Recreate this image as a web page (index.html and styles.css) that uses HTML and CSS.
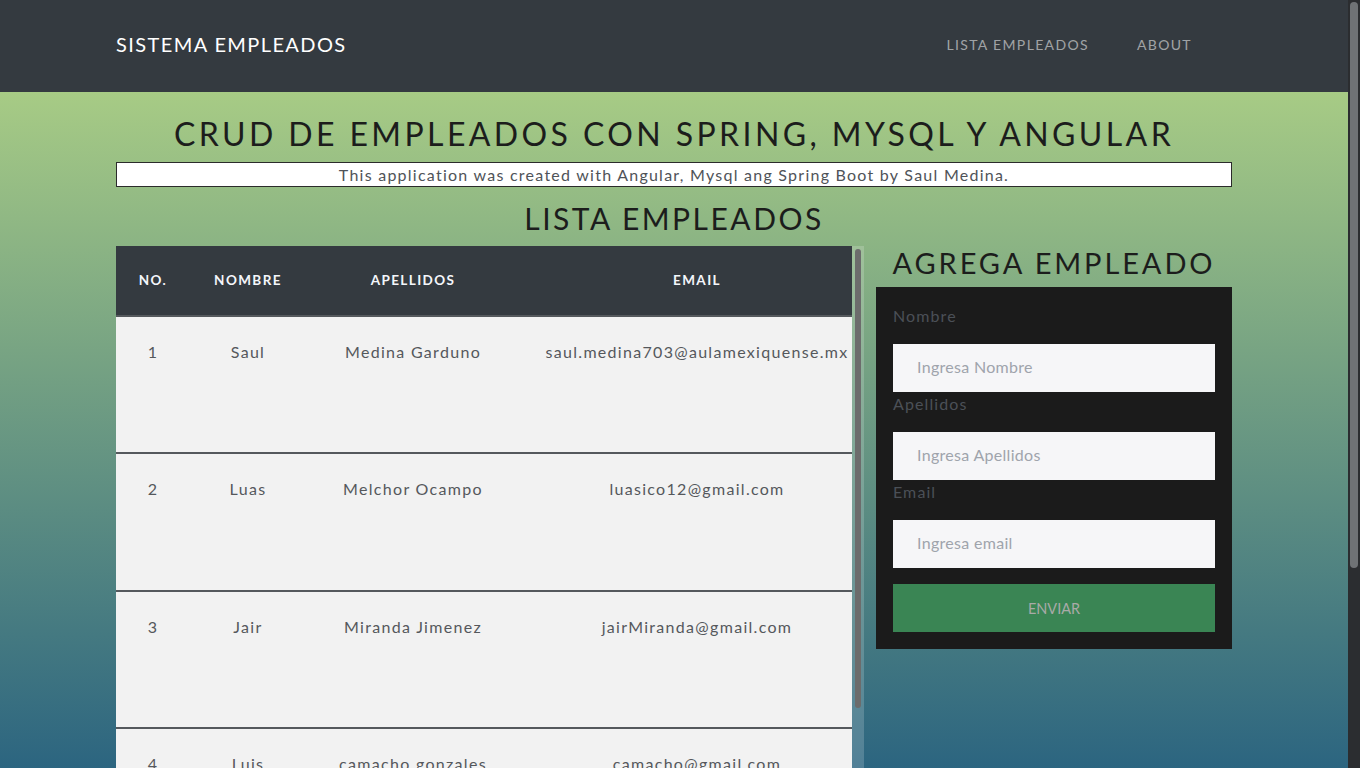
FILE: index.html
```html
<!DOCTYPE html>
<html lang="es">
<head>
<meta charset="utf-8">
<title>Sistema Empleados</title>
<link rel="stylesheet" href="styles.css">
</head>
<body>
<nav class="navbar">
  <div class="nav-inner">
    <a class="brand" href="#">SISTEMA EMPLEADOS</a>
    <ul class="nav-links">
      <li><a href="#">LISTA EMPLEADOS</a></li>
      <li><a href="#">ABOUT</a></li>
    </ul>
  </div>
</nav>
<main class="main">
  <div class="container">
    <h1 class="title">CRUD DE EMPLEADOS CON SPRING, MYSQL Y ANGULAR</h1>
    <p class="subtitle">This application was created with Angular, Mysql ang Spring Boot by Saul Medina.</p>
    <h2 class="list-title">LISTA EMPLEADOS</h2>
    <div class="content">
      <div class="table-wrap">
        <table class="emp-table">
          <thead>
            <tr>
              <th class="c-no">NO.</th>
              <th class="c-name">NOMBRE</th>
              <th class="c-last">APELLIDOS</th>
              <th class="c-mail">EMAIL</th>
            </tr>
          </thead>
          <tbody>
            <tr><td class="c-no">1</td><td class="c-name">Saul</td><td class="c-last">Medina Garduno</td><td class="c-mail">saul.medina703@aulamexiquense.mx</td></tr>
            <tr><td class="c-no">2</td><td class="c-name">Luas</td><td class="c-last">Melchor Ocampo</td><td class="c-mail">luasico12@gmail.com</td></tr>
            <tr><td class="c-no">3</td><td class="c-name">Jair</td><td class="c-last">Miranda Jimenez</td><td class="c-mail">jairMiranda@gmail.com</td></tr>
            <tr><td class="c-no">4</td><td class="c-name">Luis</td><td class="c-last">camacho gonzales</td><td class="c-mail">camacho@gmail.com</td></tr>
          </tbody>
        </table>
        <div class="scroll-track" aria-hidden="true"><div class="scroll-thumb"></div></div>
      </div>
      <aside class="form-col">
        <h2 class="form-title">AGREGA EMPLEADO</h2>
        <form class="form-box">
          <label class="label" for="nombre">Nombre</label>
          <input class="input" id="nombre" type="text" placeholder="Ingresa Nombre">
          <label class="label" for="apellidos">Apellidos</label>
          <input class="input" id="apellidos" type="text" placeholder="Ingresa Apellidos">
          <label class="label" for="email">Email</label>
          <input class="input" id="email" type="text" placeholder="Ingresa email">
          <button class="btn" type="button">ENVIAR</button>
        </form>
      </aside>
    </div>
  </div>
</main>
<div class="page-scrollbar" aria-hidden="true"><div class="page-thumb"></div></div>
</body>
</html>
```
FILE: styles.css
```css
* { box-sizing: border-box; }

html, body {
  margin: 0;
  padding: 0;
}

body {
  font-family: Lato, "Noto Sans", sans-serif;
  background: #2c6580;
  padding-right: 12px;
}

.page-scrollbar {
  position: fixed;
  top: 0;
  right: 0;
  width: 12px;
  height: 100vh;
  background: #2b2d30;
  padding: 2px 2px 0;
}

.page-thumb {
  width: 8px;
  height: 566px;
  background: #6f7275;
  border-radius: 4px;
}

.navbar {
  background: #343a40;
  height: 92px;
  margin-right: -12px;
  padding-right: 12px;
}

.nav-inner {
  width: 1116px;
  height: 92px;
  margin: 0 auto;
  display: flex;
  align-items: center;
  justify-content: space-between;
  padding-bottom: 4px;
}

.brand {
  color: #ffffff;
  text-decoration: none;
  font-size: 20px;
  letter-spacing: 1.4px;
  line-height: 24px;
}

.nav-links {
  list-style: none;
  margin: 0;
  padding: 0 40px 2px 0;
  display: flex;
  gap: 48px;
}

.nav-links a {
  color: rgba(255, 255, 255, 0.55);
  text-decoration: none;
  font-size: 14px;
  letter-spacing: 1.35px;
}

.main {
  background: linear-gradient(to bottom, #a7cb85 0px, #2c6580 676px, #2c6580 100%);
  margin-right: -12px;
  padding-right: 12px;
  padding-bottom: 230px;
}

.container {
  width: 1116px;
  margin: 0 auto;
}

.title {
  margin: 0;
  padding-top: 22px;
  font-size: 32px;
  line-height: 40px;
  font-weight: 400;
  letter-spacing: 3.4px;
  text-align: center;
  color: #1c1d1c;
}

.subtitle {
  margin: 8px 0 0;
  background: #ffffff;
  border: 1px solid #2b2b2b;
  height: 25px;
  line-height: 23px;
  font-size: 16px;
  letter-spacing: 1.25px;
  text-align: center;
  color: #4f5358;
}

.list-title {
  margin: 13px 0 10px;
  font-size: 30px;
  line-height: 36px;
  font-weight: 400;
  letter-spacing: 2.5px;
  text-align: center;
  color: #1c1d1c;
}

.content {
  display: flex;
  gap: 12px;
  align-items: flex-start;
}

.table-wrap {
  width: 748px;
  height: 560px;
  overflow: hidden;
  flex: none;
  display: flex;
  align-items: stretch;
}

.scroll-track {
  width: 12px;
  flex: none;
  background: rgba(255, 255, 255, 0.18);
  padding: 3px 3px 0;
}

.scroll-thumb {
  width: 6px;
  height: 459px;
  background: #6c6c6c;
  border-radius: 3px;
}

.emp-table {
  width: 736px;
  flex: none;
  align-self: flex-start;
  border-collapse: collapse;
  table-layout: fixed;
}

.emp-table th {
  background: #343a40;
  color: #f4f6fb;
  height: 70px;
  font-size: 13.5px;
  font-weight: 700;
  letter-spacing: 1.4px;
  text-align: center;
  vertical-align: middle;
  border-bottom: 2px solid #55595d;
  padding: 0 0 2px;
}

.emp-table td {
  background: #f2f2f2;
  color: #55585c;
  height: 137.4px;
  font-size: 16px;
  line-height: 24px;
  letter-spacing: 1.3px;
  text-align: center;
  vertical-align: top;
  padding: 23px 0 0;
  border-bottom: 2px solid #55595d;
  white-space: nowrap;
}

.c-no { width: 74px; }
.c-name { width: 116px; }
.c-last { width: 214px; }
.c-mail { width: 332px; }
.emp-table .c-mail { padding-left: 22px; }

.form-col {
  width: 356px;
  flex: none;
}

.form-title {
  margin: 0 0 6px;
  font-size: 29px;
  line-height: 35px;
  font-weight: 400;
  letter-spacing: 2.9px;
  text-align: center;
  color: #1c1d1c;
  padding-bottom: 1px;
  margin-top: -1px;
}

.form-box {
  background: #1b1b1b;
  padding: 17px;
  margin: 0;
}

.label {
  display: block;
  font-size: 16px;
  line-height: 24px;
  letter-spacing: 1.1px;
  color: #4b5057;
  margin-bottom: 16px;
}

.input {
  display: block;
  width: 100%;
  height: 48px;
  border: none;
  outline: none;
  background: #f6f6f8;
  padding: 0 24px 3px;
  font-family: inherit;
  font-size: 16px;
  letter-spacing: 0.3px;
  color: #333;
}

.input::placeholder {
  color: #9fa4ac;
}

.btn {
  display: block;
  width: 100%;
  height: 48px;
  margin-top: 16px;
  border: none;
  background: #3a8554;
  color: #a9aaa8;
  font-family: inherit;
  font-size: 14.5px;
}
```
